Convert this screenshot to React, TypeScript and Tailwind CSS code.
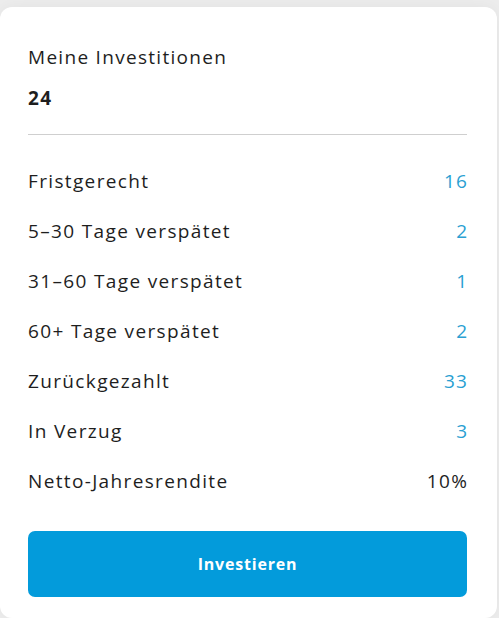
const rows = [
  { label: "Fristgerecht", value: "16", accent: true },
  { label: "5–30 Tage verspätet", value: "2", accent: true },
  { label: "31–60 Tage verspätet", value: "1", accent: true },
  { label: "60+ Tage verspätet", value: "2", accent: true },
  { label: "Zurückgezahlt", value: "33", accent: true },
  { label: "In Verzug", value: "3", accent: true },
  { label: "Netto-Jahresrendite", value: "10%", accent: false },
];

export default function App() {
  return (
    <div
      className="min-h-[618px] bg-[#ededed] pt-[7px] pr-[2px] text-[#1e1e1e]"
      style={{ fontFamily: '"Open Sans", "Noto Sans", sans-serif' }}
    >
      <div className="min-h-[611px] rounded-[12px] bg-white pl-[28px] pr-[30px] pt-[36px] shadow-[0_0_18px_rgba(0,0,0,0.05)]">
        {/* Header */}
        <div className="text-[19px] leading-[28px] tracking-[1.3px]">Meine Investitionen</div>
        <div className="mt-[13px] text-[19px] font-bold leading-[28px] tracking-[1.5px]">24</div>

        <div className="mt-[22px] h-px bg-[#cfcfcf]" />

        {/* Stats */}
        <div className="mt-[21px]">
          {rows.map((r) => (
            <div key={r.label} className="flex h-[50px] items-center justify-between text-[19px] tracking-[1.35px]">
              <span>{r.label}</span>
              <span className={r.accent ? "text-[#2a9fd2] -mr-[1.35px]" : "text-[#1e1e1e] -mr-[1.35px]"}>{r.value}</span>
            </div>
          ))}
        </div>

        <button className="mt-[25px] flex h-[66px] w-full items-center justify-center rounded-[7px] bg-[#039bdb] text-[16px] font-bold tracking-[0.8px] text-white">
          Investieren
        </button>
      </div>
    </div>
  );
}
